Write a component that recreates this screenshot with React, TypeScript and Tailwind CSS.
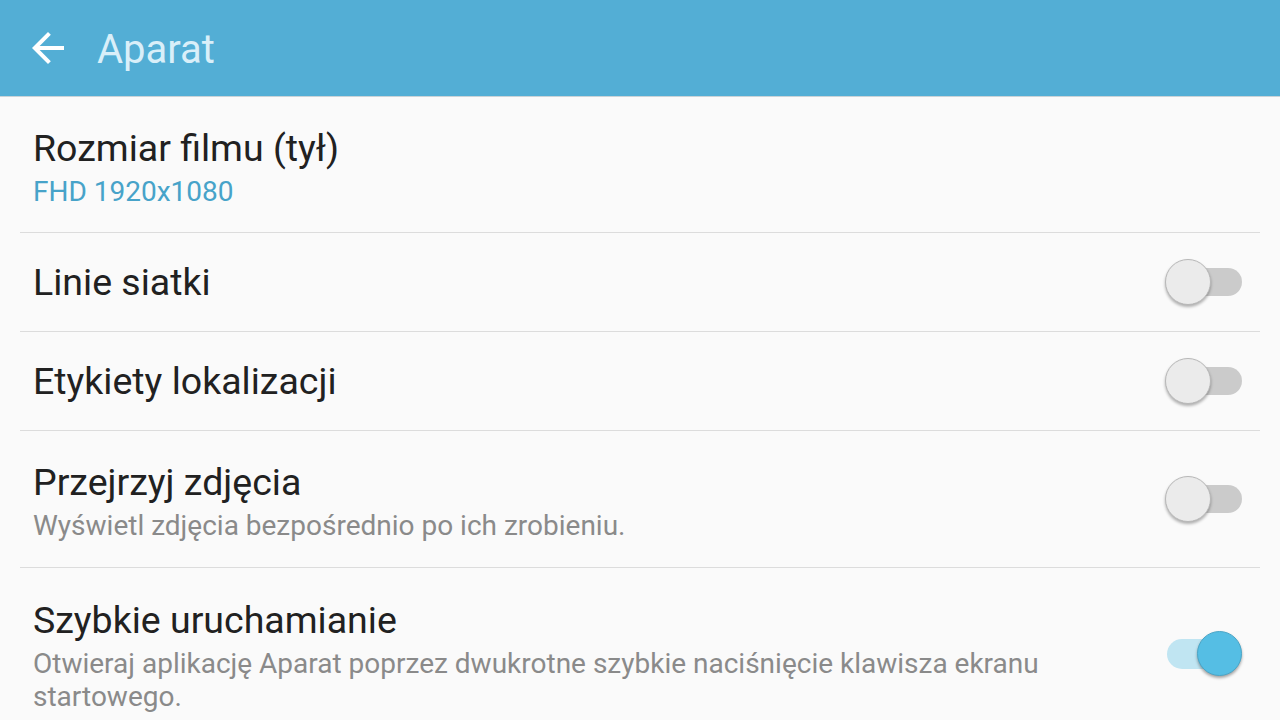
import React from 'react';

interface ToggleProps {
  on?: boolean;
}

const Toggle: React.FC<ToggleProps> = ({ on }) => (
  <div className="relative w-[77px] h-[46px] shrink-0">
    <div
      className={
        on
          ? 'absolute left-[2px] right-[2px] top-[8px] h-[30px] rounded-full bg-[#c0e5f2]'
          : 'absolute left-[4px] right-0 top-[9px] h-[28px] rounded-full bg-[#cbcbcb]'
      }
    />
    <div
      className={
        on
          ? 'absolute right-0 top-0 w-[45px] h-[45px] rounded-full bg-[#55bee4] border border-[#4aa6c8] shadow-[0_2px_3px_rgba(0,0,0,0.35)]'
          : 'absolute left-0 top-0 w-[46px] h-[46px] rounded-full bg-[#ebebeb] border border-[#b8b8b8] shadow-[0_2px_3px_rgba(0,0,0,0.3)]'
      }
    />
  </div>
);

interface RowProps {
  title: string;
  sub?: string;
  blueSub?: boolean;
  toggle?: boolean;
  on?: boolean;
  box: string;
  last?: boolean;
}

const Row: React.FC<RowProps> = ({ title, sub, blueSub, toggle, on, box, last }) => (
  <div className={last ? 'mx-[20px]' : 'mx-[20px] border-b border-[#dcdcdc]'}>
    <div className={`flex items-center justify-between pl-[13px] pr-[18px] ${box}`}>
      <div className={`min-w-0 max-w-[1085px] ${sub ? 'pt-[5px]' : ''}`}>
        <div className="text-[37.5px] leading-[42px] text-[#212121]">{title}</div>
        {sub && (
          <div className={`mt-[6px] text-[28px] leading-[33px] ${blueSub ? 'text-[#47a3c9]' : 'text-[#8a8a8a]'}`}>
            {sub}
          </div>
        )}
      </div>
      {toggle && <Toggle on={on} />}
    </div>
  </div>
);

export default function App() {
  return (
    <div className="w-[1280px] h-[720px] overflow-hidden bg-[#fafafa] font-['Roboto','Liberation_Sans',sans-serif]">
      <header className="h-[97px] bg-[#53aed5] border-b border-[#c9d3d8] flex items-center">
        <svg className="ml-[24px] w-[48px] h-[48px]" viewBox="0 0 24 24" fill="#ffffff">
          <path d="M20 11H7.83l5.59-5.59L12 4l-8 8 8 8 1.41-1.41L7.83 13H20v-2z" />
        </svg>
        <h1 className="ml-[25px] mt-[3px] text-[40px] text-[#d9eff9] leading-none">Aparat</h1>
      </header>
      <Row title="Rozmiar filmu (tył)" sub="FHD 1920x1080" blueSub box="h-[135px]" />
      <Row title="Linie siatki" toggle box="h-[98px]" />
      <Row title="Etykiety lokalizacji" toggle box="h-[98px]" />
      <Row title="Przejrzyj zdjęcia" sub="Wyświetl zdjęcia bezpośrednio po ich zrobieniu." toggle box="h-[136px]" />
      <Row
        title="Szybkie uruchamianie"
        sub="Otwieraj aplikację Aparat poprzez dwukrotne szybkie naciśnięcie klawisza ekranu startowego."
        toggle
        on
        last
        box="pt-[26px] pb-[24px]"
      />
    </div>
  );
}
